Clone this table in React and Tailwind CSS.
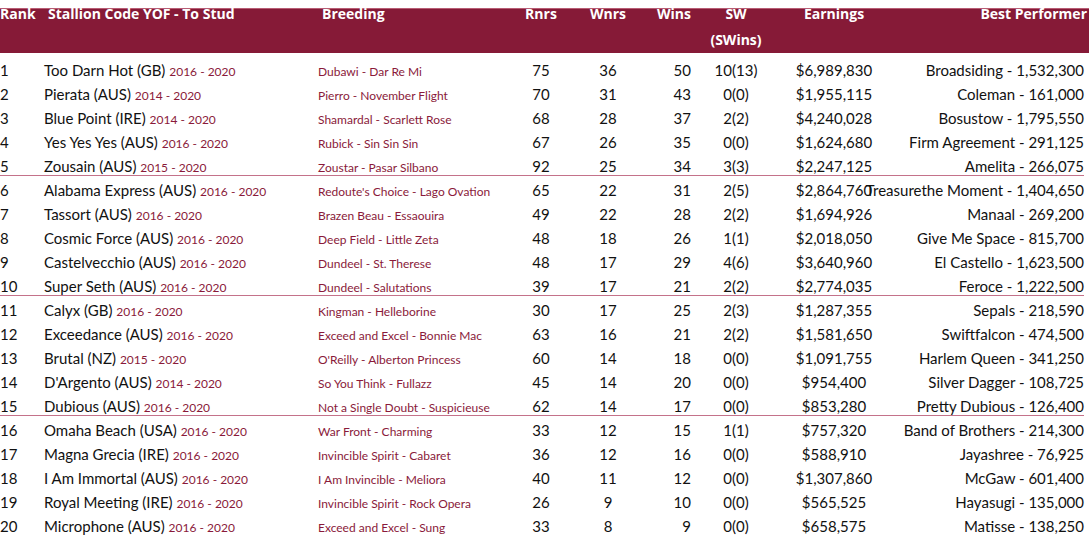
const rows = [
  ["1", "Too Darn Hot (GB)", "2016 - 2020", "Dubawi - Dar Re Mi", "75", "36", "50", "10(13)", "$6,989,830", "Broadsiding - 1,532,300"],
  ["2", "Pierata (AUS)", "2014 - 2020", "Pierro - November Flight", "70", "31", "43", "0(0)", "$1,955,115", "Coleman - 161,000"],
  ["3", "Blue Point (IRE)", "2014 - 2020", "Shamardal - Scarlett Rose", "68", "28", "37", "2(2)", "$4,240,028", "Bosustow - 1,795,550"],
  ["4", "Yes Yes Yes (AUS)", "2016 - 2020", "Rubick - Sin Sin Sin", "67", "26", "35", "0(0)", "$1,624,680", "Firm Agreement - 291,125"],
  ["5", "Zousain (AUS)", "2015 - 2020", "Zoustar - Pasar Silbano", "92", "25", "34", "3(3)", "$2,247,125", "Amelita - 266,075"],
  ["6", "Alabama Express (AUS)", "2016 - 2020", "Redoute's Choice - Lago Ovation", "65", "22", "31", "2(5)", "$2,864,760", "Treasurethe Moment - 1,404,650"],
  ["7", "Tassort (AUS)", "2016 - 2020", "Brazen Beau - Essaouira", "49", "22", "28", "2(2)", "$1,694,926", "Manaal - 269,200"],
  ["8", "Cosmic Force (AUS)", "2016 - 2020", "Deep Field - Little Zeta", "48", "18", "26", "1(1)", "$2,018,050", "Give Me Space - 815,700"],
  ["9", "Castelvecchio (AUS)", "2016 - 2020", "Dundeel - St. Therese", "48", "17", "29", "4(6)", "$3,640,960", "El Castello - 1,623,500"],
  ["10", "Super Seth (AUS)", "2016 - 2020", "Dundeel - Salutations", "39", "17", "21", "2(2)", "$2,774,035", "Feroce - 1,222,500"],
  ["11", "Calyx (GB)", "2016 - 2020", "Kingman - Helleborine", "30", "17", "25", "2(3)", "$1,287,355", "Sepals - 218,590"],
  ["12", "Exceedance (AUS)", "2016 - 2020", "Exceed and Excel - Bonnie Mac", "63", "16", "21", "2(2)", "$1,581,650", "Swiftfalcon - 474,500"],
  ["13", "Brutal (NZ)", "2015 - 2020", "O'Reilly - Alberton Princess", "60", "14", "18", "0(0)", "$1,091,755", "Harlem Queen - 341,250"],
  ["14", "D'Argento (AUS)", "2014 - 2020", "So You Think - Fullazz", "45", "14", "20", "0(0)", "$954,400", "Silver Dagger - 108,725"],
  ["15", "Dubious (AUS)", "2016 - 2020", "Not a Single Doubt - Suspicieuse", "62", "14", "17", "0(0)", "$853,280", "Pretty Dubious - 126,400"],
  ["16", "Omaha Beach (USA)", "2016 - 2020", "War Front - Charming", "33", "12", "15", "1(1)", "$757,320", "Band of Brothers - 214,300"],
  ["17", "Magna Grecia (IRE)", "2016 - 2020", "Invincible Spirit - Cabaret", "36", "12", "16", "0(0)", "$588,910", "Jayashree - 76,925"],
  ["18", "I Am Immortal (AUS)", "2016 - 2020", "I Am Invincible - Meliora", "40", "11", "12", "0(0)", "$1,307,860", "McGaw - 601,400"],
  ["19", "Royal Meeting (IRE)", "2016 - 2020", "Invincible Spirit - Rock Opera", "26", "9", "10", "0(0)", "$565,525", "Hayasugi - 135,000"],
  ["20", "Microphone (AUS)", "2016 - 2020", "Exceed and Excel - Sung", "33", "8", "9", "0(0)", "$658,575", "Matisse - 138,250"],
];

function Row({ r, divider }) {
  const [rank, name, years, breeding, rnrs, wnrs, wins, sw, earn, best] = r;
  return (
    <div className="h-[24px]">
      <div
        className={
          divider
            ? "flex items-baseline w-[1084px] h-[22px] leading-[24px] border-b border-[#c4728a] text-[15px] text-[#111]"
            : "flex items-baseline w-[1084px] h-[24px] leading-[24px] text-[15px] text-[#111]"
        }
      >
        <div className="w-[44px] shrink-0">{rank}</div>
        <div className="w-[274px] shrink-0 whitespace-nowrap">
          {name} <span className="text-[12px] text-[#8a1a3a]">{years}</span>
        </div>
        <div className="w-[192px] shrink-0 whitespace-nowrap text-[12px] text-[#8a1a3a]">{breeding}</div>
        <div className="w-[62px] shrink-0 text-center">{rnrs}</div>
        <div className="w-[72px] shrink-0 text-center">{wnrs}</div>
        <div className="w-[47px] shrink-0 text-right">{wins}</div>
        <div className="w-[90px] shrink-0 text-center">{sw}</div>
        <div className="w-[106px] shrink-0 text-center">{earn}</div>
        <div className="w-[197px] shrink-0 flex justify-end whitespace-nowrap">
          <span>{best}</span>
        </div>
      </div>
    </div>
  );
}

export default function App() {
  return (
    <div className="w-[1089px] h-[555px] bg-white overflow-hidden pt-[8px]" style={{ fontFamily: "Lato, 'Open Sans', sans-serif" }}>
      {/* header band */}
      <div
        className="flex h-[45px] bg-[#861a37] border-t border-[#b85c74] text-white font-bold text-[14px] leading-[26px]"
        style={{ fontFamily: "'Open Sans', sans-serif" }}
      >
        <div className="w-[48px] shrink-0 -mt-[8px]">Rank</div>
        <div className="w-[274px] shrink-0 -mt-[8px]">Stallion Code YOF - To Stud</div>
        <div className="w-[188px] shrink-0 -mt-[8px]">Breeding</div>
        <div className="w-[62px] shrink-0 -mt-[8px] text-center">Rnrs</div>
        <div className="w-[72px] shrink-0 -mt-[8px] text-center">Wnrs</div>
        <div className="w-[47px] shrink-0 -mt-[8px] text-right">Wins</div>
        <div className="w-[90px] shrink-0 -mt-[8px] text-center">
          SW
          <br />
          (SWins)
        </div>
        <div className="w-[106px] shrink-0 -mt-[8px] text-center">Earnings</div>
        <div className="flex-1 -mt-[8px] text-right pr-[2px]">Best Performer</div>
      </div>

      <div className="mt-[5px]">
        {rows.map((r, i) => (
          <Row key={r[0]} r={r} divider={i === 4 || i === 9 || i === 14} />
        ))}
      </div>
    </div>
  );
}
